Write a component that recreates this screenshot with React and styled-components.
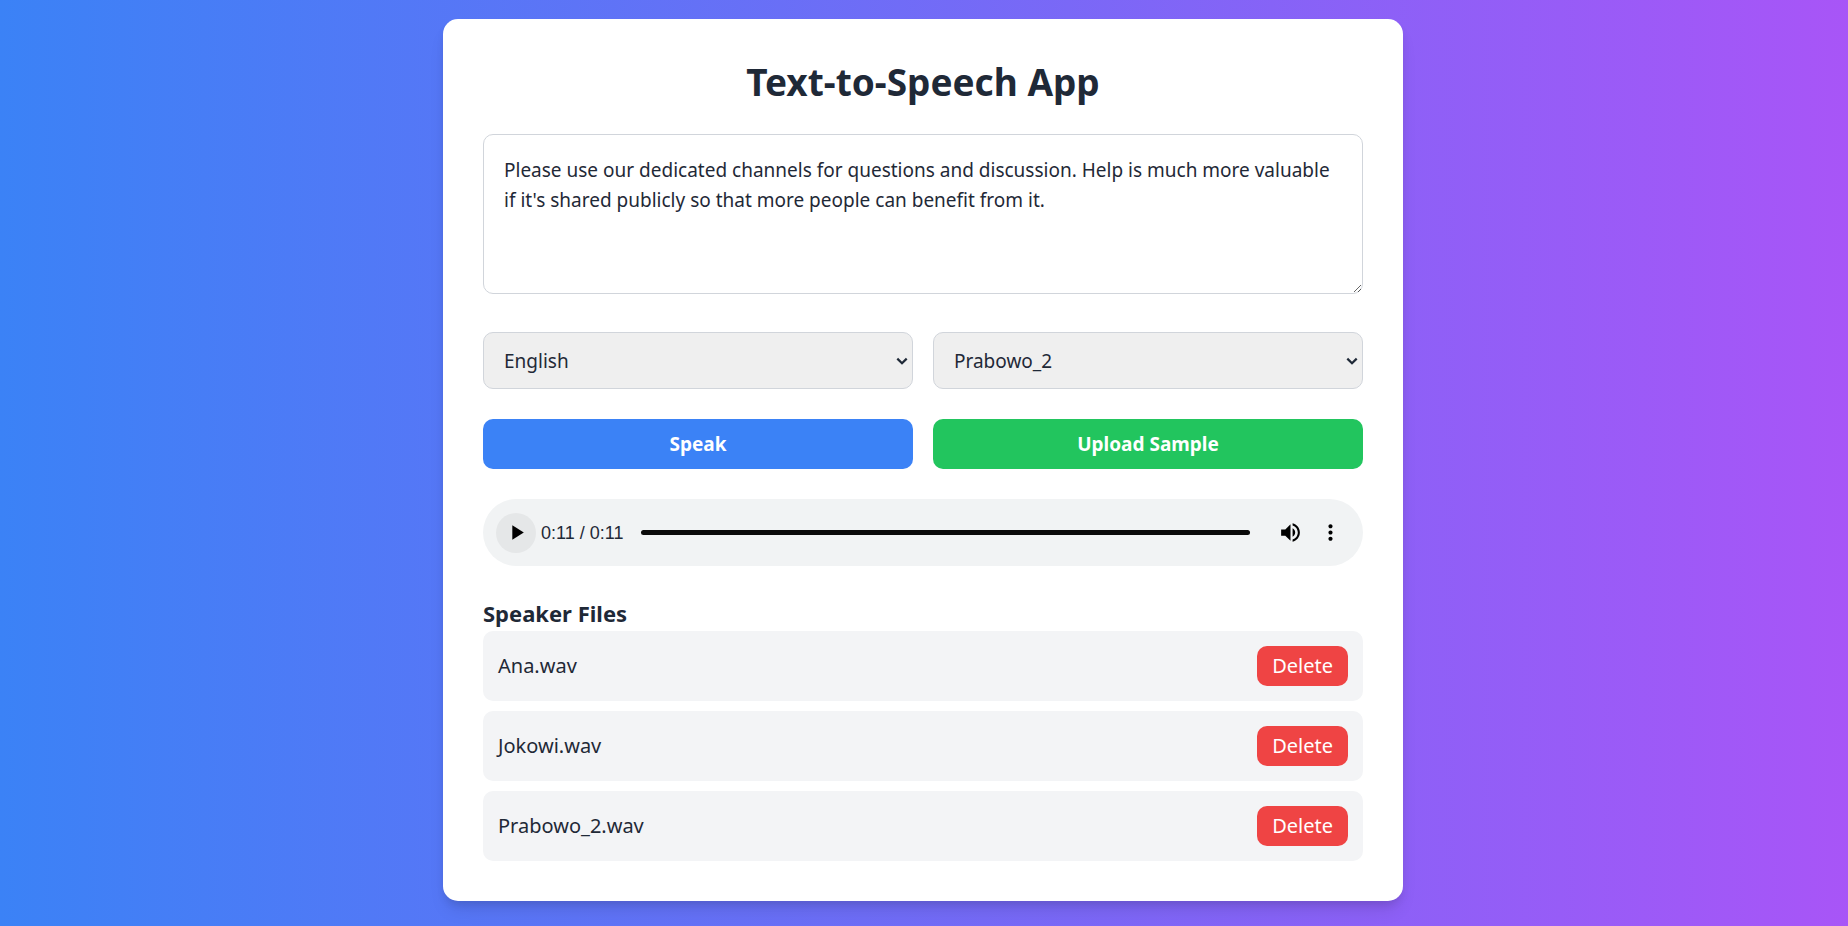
import React, { useState } from "react";
import styled, { createGlobalStyle } from "styled-components";

const GlobalStyle = createGlobalStyle`
  *, *::before, *::after { box-sizing: border-box; }
  body {
    margin: 0;
    font-family: "Noto Sans", "Open Sans", sans-serif;
    font-size: 19px;
    line-height: 30px;
    color: #1f2937;
  }
  button, select, textarea, input { font: inherit; color: inherit; margin: 0; }
`;

const Page = styled.div`
  min-height: 100vh;
  display: flex;
  justify-content: center;
  align-items: flex-start;
  padding: 19px 18px 24px 16px;
  background: linear-gradient(to right, #3b82f6, #a855f7);
`;

const Card = styled.main`
  width: 100%;
  max-width: 960px;
  padding: 40px;
  display: flex;
  flex-direction: column;
  gap: 30px;
  background: #fff;
  border-radius: 15px;
  box-shadow: 0 12px 18px -4px rgba(0, 0, 0, 0.1), 0 5px 8px -2px rgba(0, 0, 0, 0.1);
`;

const Title = styled.h1`
  margin: 0;
  font-size: 37px;
  line-height: 45px;
  font-weight: 700;
  text-align: center;
`;

const TextInput = styled.textarea`
  display: block;
  width: 100%;
  height: 160px;
  margin-bottom: 8px;
  padding: 20px;
  border: 1px solid #d1d5db;
  border-radius: 10px;
  background: #fff;
  resize: vertical;
`;

const Columns = styled.div`
  display: grid;
  grid-template-columns: 1fr 1fr;
  gap: 20px;
`;

const SelectBox = styled.div`
  display: grid;
  align-items: center;

  > * { grid-area: 1 / 1; }
  > svg {
    justify-self: end;
    margin-right: 5px;
    pointer-events: none;
  }
`;

const Select = styled.select`
  appearance: none;
  width: 100%;
  height: 57px;
  padding: 0 20px;
  border: 1px solid #d1d5db;
  border-radius: 10px;
  background: #efefef;
`;

const Button = styled.button`
  height: 50px;
  border: 0;
  border-radius: 10px;
  background: ${(p) => p.$color};
  color: #fff;
  font-weight: 700;
  cursor: pointer;
`;

const Player = styled.div`
  display: flex;
  align-items: center;
  height: 67px;
  padding: 0 13px;
  border-radius: 34px;
  background: #f1f3f4;
`;

const RoundButton = styled.button`
  flex: none;
  display: grid;
  place-items: center;
  width: 40px;
  height: 40px;
  padding: 0;
  border: 0;
  border-radius: 50%;
  background: ${(p) => (p.$active ? "#e5e7e8" : "transparent")};
  cursor: pointer;
`;

const Time = styled.span`
  margin: 0 18px 0 5px;
  font-family: "Liberation Sans", Arial, sans-serif;
  font-size: 18px;
  white-space: nowrap;
`;

const Track = styled.input`
  appearance: none;
  flex: 1;
  min-width: 0;
  height: 5px;
  margin-right: 20px;
  border-radius: 3px;
  background: #0a0a0a;
  cursor: pointer;

  &::-webkit-slider-thumb {
    appearance: none;
    width: 10px;
    height: 5px;
    background: transparent;
  }
`;

const Section = styled.section`
  display: flex;
  flex-direction: column;
`;

const SectionTitle = styled.h2`
  margin: 0;
  font-size: 22px;
  line-height: 35px;
  font-weight: 700;
`;

const FileList = styled.ul`
  display: flex;
  flex-direction: column;
  gap: 10px;
  margin: 0;
  padding: 0;
  list-style: none;
  font-size: 20px;
`;

const FileRow = styled.li`
  display: flex;
  justify-content: space-between;
  align-items: center;
  padding: 15px;
  border-radius: 10px;
  background: #f3f4f6;
`;

const DeleteButton = styled.button`
  height: 40px;
  padding: 0 15px;
  border: 0;
  border-radius: 10px;
  background: #ef4444;
  color: #fff;
  cursor: pointer;
`;

const Icon = ({ path }) => (
  <svg width="25" height="25" viewBox="0 0 24 24" fill="#000" aria-hidden="true">
    <path d={path} />
  </svg>
);

const PLAY = "M8 5v14l11-7z";
const VOLUME =
  "M3 9v6h4l5 5V4L7 9H3zm13.5 3c0-1.77-1.02-3.29-2.5-4.03v8.05c1.48-.73 2.5-2.25 2.5-4.02zM14 3.23v2.06c2.89.86 5 3.54 5 6.71s-2.11 5.85-5 6.71v2.06c4.01-.91 7-4.49 7-8.77s-2.99-7.86-7-8.77z";
const MORE =
  "M12 8c1.1 0 2-.9 2-2s-.9-2-2-2-2 .9-2 2 .9 2 2 2zm0 2c-1.1 0-2 .9-2 2s.9 2 2 2 2-.9 2-2-.9-2-2-2zm0 6c-1.1 0-2 .9-2 2s.9 2 2 2 2-.9 2-2-.9-2-2-2z";

const Dropdown = ({ label, options, initial }) => {
  const [value, setValue] = useState(initial);
  return (
    <SelectBox>
      <Select aria-label={label} value={value} onChange={(e) => setValue(e.target.value)}>
        {options.map((o) => (
          <option key={o}>{o}</option>
        ))}
      </Select>
      <svg width="12" height="8" viewBox="0 0 12 8" fill="none" stroke="#1f2937" strokeWidth="2.2" aria-hidden="true">
        <path d="M1.3 1.6 6 6.2l4.7-4.6" />
      </svg>
    </SelectBox>
  );
};

export default function App() {
  const [text, setText] = useState(
    "Please use our dedicated channels for questions and discussion. Help is much more valuable if it's shared publicly so that more people can benefit from it."
  );
  const [files, setFiles] = useState(["Ana.wav", "Jokowi.wav", "Prabowo_2.wav"]);
  const [position, setPosition] = useState(11);

  return (
    <>
      <GlobalStyle />
      <Page>
        <Card>
          <Title>Text-to-Speech App</Title>
          <TextInput aria-label="Text to speak" value={text} onChange={(e) => setText(e.target.value)} />
          <Columns>
            <Dropdown label="Language" options={["English"]} initial="English" />
            <Dropdown label="Speaker" options={["Ana", "Jokowi", "Prabowo_2"]} initial="Prabowo_2" />
          </Columns>
          <Columns>
            <Button type="button" $color="#3b82f6">Speak</Button>
            <Button type="button" $color="#22c55e">Upload Sample</Button>
          </Columns>
          <Player role="group" aria-label="Audio player">
            <RoundButton type="button" aria-label="Play" $active><Icon path={PLAY} /></RoundButton>
            <Time>0:{String(position).padStart(2, "0")} / 0:11</Time>
            <Track
              type="range"
              aria-label="Playback position"
              min="0"
              max="11"
              value={position}
              onChange={(e) => setPosition(Number(e.target.value))}
            />
            <RoundButton type="button" aria-label="Mute"><Icon path={VOLUME} /></RoundButton>
            <RoundButton type="button" aria-label="More options"><Icon path={MORE} /></RoundButton>
          </Player>
          <Section>
            <SectionTitle>Speaker Files</SectionTitle>
            <FileList>
              {files.map((name) => (
                <FileRow key={name}>
                  <span>{name}</span>
                  <DeleteButton type="button" onClick={() => setFiles(files.filter((f) => f !== name))}>
                    Delete
                  </DeleteButton>
                </FileRow>
              ))}
            </FileList>
          </Section>
        </Card>
      </Page>
    </>
  );
}
